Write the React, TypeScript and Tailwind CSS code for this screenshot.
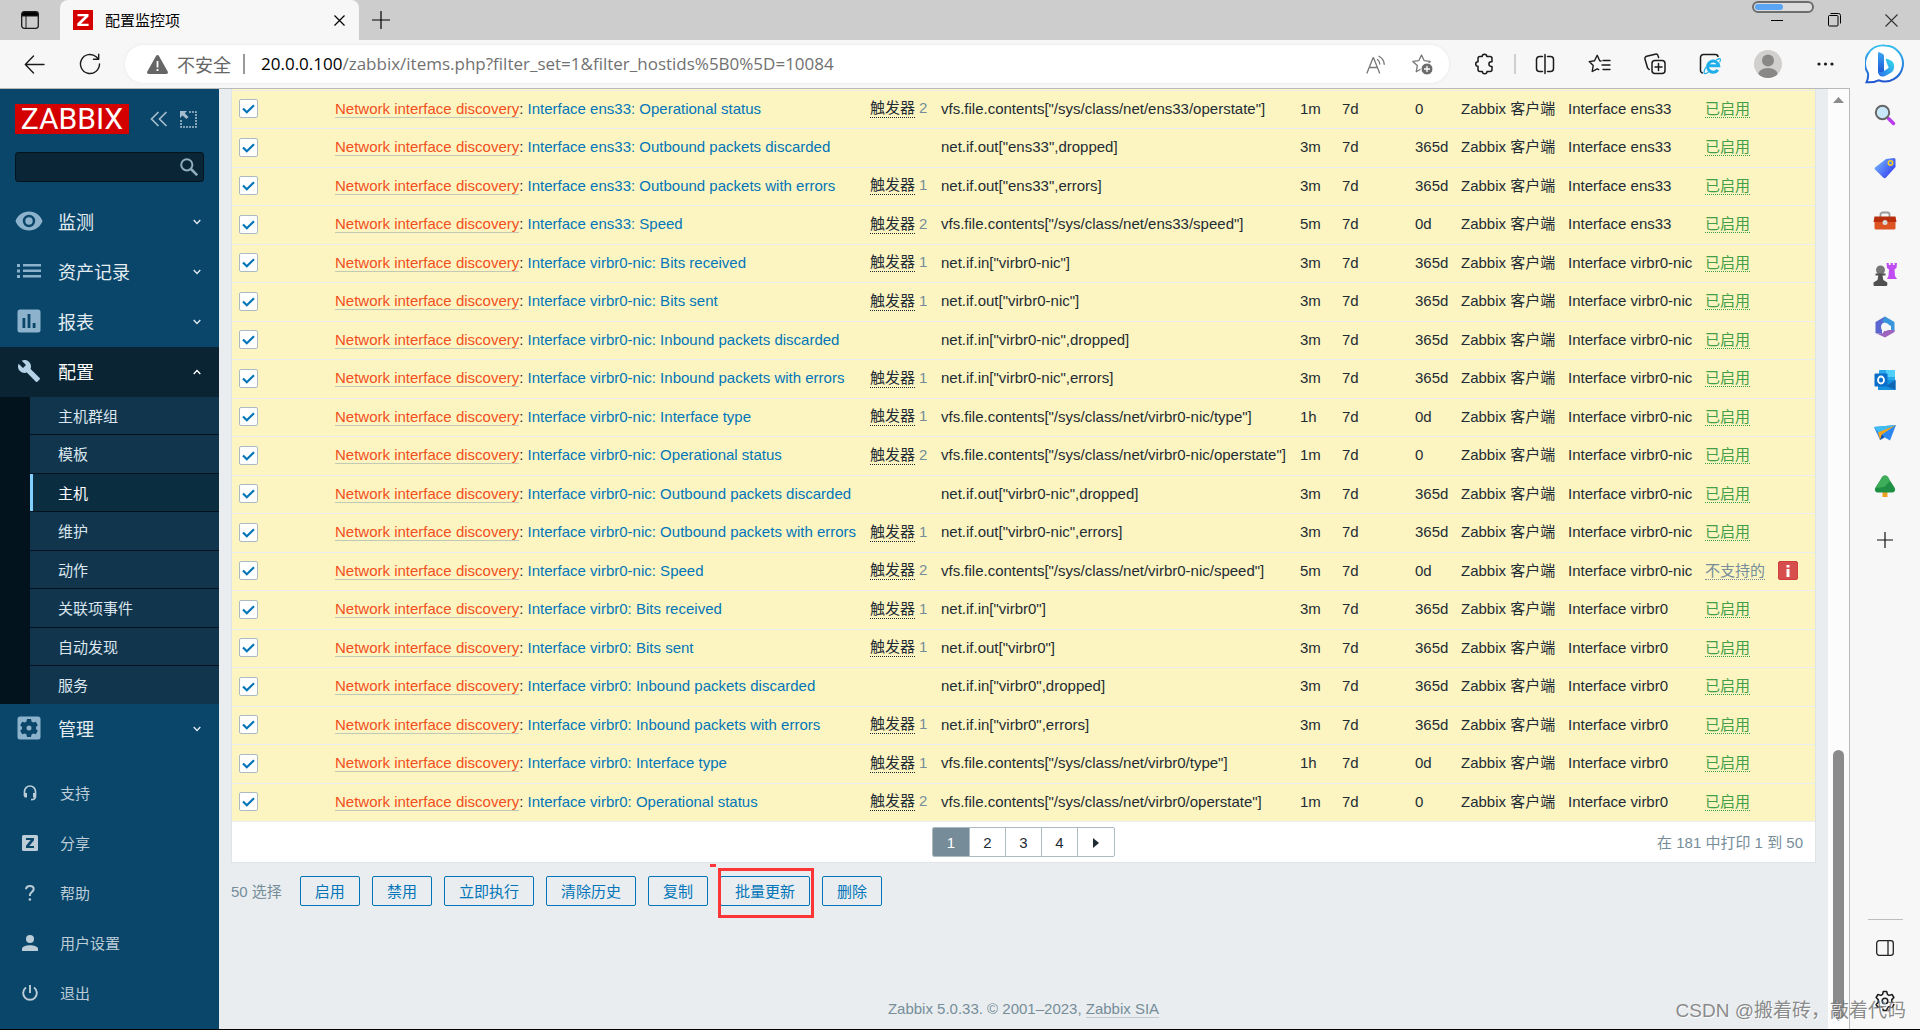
import type { ReactNode } from "react";

type Item = {
  name: string;
  triggers: number;
  itemKey: string;
  interval: string;
  trends: string;
  iface: string;
  unsupported?: boolean;
};

const row = (
  iface: string,
  name: string,
  triggers: number,
  itemKey: string,
  interval: string,
  trends: string,
  unsupported = false,
): Item => ({ iface, name, triggers, itemKey, interval, trends, unsupported });

const items: Item[] = [
  row("ens33", "Operational status", 2, 'vfs.file.contents["/sys/class/net/ens33/operstate"]', "1m", "0"),
  row("ens33", "Outbound packets discarded", 0, 'net.if.out["ens33",dropped]', "3m", "365d"),
  row("ens33", "Outbound packets with errors", 1, 'net.if.out["ens33",errors]', "3m", "365d"),
  row("ens33", "Speed", 2, 'vfs.file.contents["/sys/class/net/ens33/speed"]', "5m", "0d"),
  row("virbr0-nic", "Bits received", 1, 'net.if.in["virbr0-nic"]', "3m", "365d"),
  row("virbr0-nic", "Bits sent", 1, 'net.if.out["virbr0-nic"]', "3m", "365d"),
  row("virbr0-nic", "Inbound packets discarded", 0, 'net.if.in["virbr0-nic",dropped]', "3m", "365d"),
  row("virbr0-nic", "Inbound packets with errors", 1, 'net.if.in["virbr0-nic",errors]', "3m", "365d"),
  row("virbr0-nic", "Interface type", 1, 'vfs.file.contents["/sys/class/net/virbr0-nic/type"]', "1h", "0d"),
  row("virbr0-nic", "Operational status", 2, 'vfs.file.contents["/sys/class/net/virbr0-nic/operstate"]', "1m", "0"),
  row("virbr0-nic", "Outbound packets discarded", 0, 'net.if.out["virbr0-nic",dropped]', "3m", "365d"),
  row("virbr0-nic", "Outbound packets with errors", 1, 'net.if.out["virbr0-nic",errors]', "3m", "365d"),
  row("virbr0-nic", "Speed", 2, 'vfs.file.contents["/sys/class/net/virbr0-nic/speed"]', "5m", "0d", true),
  row("virbr0", "Bits received", 1, 'net.if.in["virbr0"]', "3m", "365d"),
  row("virbr0", "Bits sent", 1, 'net.if.out["virbr0"]', "3m", "365d"),
  row("virbr0", "Inbound packets discarded", 0, 'net.if.in["virbr0",dropped]', "3m", "365d"),
  row("virbr0", "Inbound packets with errors", 1, 'net.if.in["virbr0",errors]', "3m", "365d"),
  row("virbr0", "Interface type", 1, 'vfs.file.contents["/sys/class/net/virbr0/type"]', "1h", "0d"),
  row("virbr0", "Operational status", 2, 'vfs.file.contents["/sys/class/net/virbr0/operstate"]', "1m", "0"),
];

/* ---------- browser chrome ---------- */

function Line({ size = 24, w = 1, children }: { size?: number; w?: number; children: ReactNode }) {
  return (
    <svg width={size} height={size} viewBox="0 0 24 24" fill="none" stroke="currentColor" strokeWidth={w} strokeLinecap="round" strokeLinejoin="round" aria-hidden="true">
      {children}
    </svg>
  );
}

function TabStrip() {
  return (
    <div className="flex h-10 items-stretch bg-[#cdcdcd]">
      <button aria-label="标签页操作" className="flex w-[60px] items-center justify-center">
        <svg width="18" height="18" viewBox="0 0 18 18" fill="none" stroke="#1b1b1b" aria-hidden="true">
          <rect x="0.7" y="0.7" width="16.6" height="16.6" rx="2.5" strokeWidth="1.3" />
          <path d="M1 3a2 2 0 0 1 2-2h12a2 2 0 0 1 2 2v2H1z" fill="#000" />
          <path d="M5 5v12" />
        </svg>
      </button>
      <div className="flex w-[299px] items-center rounded-t-lg bg-[#f7f7f7] pl-[13px] pr-2">
        <svg width="20" height="20" viewBox="0 0 20 20" aria-hidden="true">
          <rect width="20" height="20" fill="#d40000" />
          <path d="M4.500 4h11v2.400L8 13.700h7.600V16H4.300v-2.400L11.800 6.300H4.500z" fill="#fff" />
        </svg>
        <span className="ml-3 flex-1 text-[15px] text-black">配置监控项</span>
        <button aria-label="关闭标签页" className="flex h-6 w-6 items-center justify-center text-black">
          <svg width="11" height="11" viewBox="0 0 11 11" stroke="currentColor" strokeWidth="1.2" aria-hidden="true">
            <path d="M0.500 0.500l10 10M10.500 0.500l-10 10" />
          </svg>
        </button>
      </div>
      <button aria-label="新建标签页" className="ml-3 flex w-5 items-center justify-center text-black">
        <svg width="18" height="18" viewBox="0 0 18 18" stroke="currentColor" strokeWidth="1.2" aria-hidden="true">
          <path d="M9 0v18M0 9h18" />
        </svg>
      </button>
      <div className="relative ml-auto flex items-center">
        <div className="absolute left-1 top-px h-3 w-[62px] rounded-full border-2 border-[#6d6d6d] bg-[#dcdcdc] p-px">
          <div className="h-1.5 w-7 rounded-full bg-[#5aa5f5]" />
        </div>
        <button aria-label="最小化" className="flex h-10 w-[58px] items-center justify-center">
          <span className="h-px w-3 bg-black" />
        </button>
        <button aria-label="还原" className="flex h-10 w-[56px] items-center justify-center">
          <svg width="13" height="14" viewBox="0 0 13 14" fill="none" stroke="#000" strokeWidth="1" aria-hidden="true">
            <rect x="0.500" y="2.500" width="9.500" height="10.500" rx="1" />
            <path d="M2.500 0.500h8a2 2 0 0 1 2 2v8" />
          </svg>
        </button>
        <button aria-label="关闭" className="flex h-10 w-[58px] items-center justify-center">
          <svg width="13" height="13" viewBox="0 0 13 13" stroke="#333" strokeWidth="1.1" aria-hidden="true">
            <path d="M0.500 0.500l12 12M12.500 0.500l-12 12" />
          </svg>
        </button>
      </div>
    </div>
  );
}

const starPath = "M10.500 2l2.600 5.600 6.100.8-4.500 4.200 1.100 6.200-5.300-3-5.300 3 1.100-6.200L1.800 8.400l6.100-.8z";

function Toolbar() {
  return (
    <div className="flex h-12 items-center bg-[#f7f7f7] text-[#1b1b1b]">
      <button aria-label="后退" className="ml-6 flex w-[21px] justify-center">
        <svg width="21" height="19" viewBox="0 0 21 19" fill="none" stroke="currentColor" strokeWidth="1.400" strokeLinecap="round" strokeLinejoin="round" aria-hidden="true">
          <path d="M20 9.500H1.500M9.500 1L1.300 9.500 9.500 18" />
        </svg>
      </button>
      <button aria-label="刷新" className="ml-[34px] flex w-[22px] justify-center">
        <svg width="22" height="22" viewBox="0 0 22 22" fill="none" stroke="currentColor" strokeWidth="1.400" strokeLinecap="round" strokeLinejoin="round" aria-hidden="true">
          <path d="M20.500 11a9.500 9.500 0 1 1-3.300-7.200L19.500 6M19.700 1.200V6.200H14.500" />
        </svg>
      </button>
      <div className="ml-6 flex h-[38px] flex-1 items-center rounded-full bg-white pl-[22px] pr-4 shadow-[0_0_4px_rgba(0,0,0,0.06)]">
        <svg width="21" height="19" viewBox="0 0 21 19" aria-hidden="true">
          <path d="M9 .9a1.700 1.700 0 0 1 3 0l8.700 15.700A1.600 1.600 0 0 1 19.300 19H1.700a1.600 1.600 0 0 1-1.400-2.400z" fill="#666" />
          <path d="M9.600 6h1.800v6.500H9.600zM9.600 14h1.800v2H9.600z" fill="#fff" />
        </svg>
        <span className="ml-[9px] text-[18px] leading-6 text-[#666]">不安全</span>
        <span className="ml-3 h-5 w-0.5 bg-[#999]" />
        <a href="#items" className="ml-4 font-['Open_Sans','Noto_Sans_CJK_SC',sans-serif] text-[17px] leading-6 text-[#717171]">
          <span className="text-black">20.0.0.100</span>/zabbix/items.php?filter_set=1&amp;filter_hostids%5B0%5D=10084
        </a>
        <span className="flex-1" />
        <button aria-label="大声朗读" className="mr-[25px] text-[#777]">
          <svg width="20" height="19" viewBox="0 0 20 19" fill="none" stroke="currentColor" strokeWidth="1.300" strokeLinecap="round" aria-hidden="true">
            <path d="M1 18L7 3h.6l6 15M3.300 12.500h8M11.500 4.500c1.500 1.200 2.300 2.800 2.300 4.500M13 1.300c3.200 1.800 5 4.600 5.200 8" />
          </svg>
        </button>
        <button aria-label="收藏此页" className="text-[#777]">
          <svg width="22" height="22" viewBox="0 0 22 22" fill="none" stroke="currentColor" strokeWidth="1.300" strokeLinejoin="round" aria-hidden="true">
            <path d={starPath} />
            <circle cx="16" cy="16" r="6" fill="#6d6d6d" stroke="#fff" strokeWidth="1" />
            <path d="M16 13v6M13 16h6" stroke="#fff" strokeWidth="1.300" />
          </svg>
        </button>
      </div>
      <div className="flex items-center">
        <button aria-label="扩展" className="ml-[23px] flex w-6 justify-center">
          <Line size={24} w={1.5}>
            <path d="M8 4.500h2.200a2.300 2.300 0 0 1 4.600 0H18a2 2 0 0 1 2 2v3.300h-.8a2.300 2.300 0 0 0 0 4.600h.8v3.100a2 2 0 0 1-2 2h-3a2.300 2.300 0 0 1-4.600 0H8a2 2 0 0 1-2-2v-3.200a2.300 2.300 0 0 1 0-4.600V6.500a2 2 0 0 1 2-2z" />
          </Line>
        </button>
        <span className="ml-[18px] h-5 w-0.5 bg-[#cfcfcf]" />
        <button aria-label="分屏" className="ml-[17px] flex w-6 justify-center">
          <Line size={24} w={1.5}>
            <path d="M9.500 4.500H6.500a3 3 0 0 0-3 3v9a3 3 0 0 0 3 3h3M14.500 4.500h3a3 3 0 0 1 3 3v9a3 3 0 0 1-3 3h-3M12 2.500v19" />
          </Line>
        </button>
        <button aria-label="收藏夹" className="ml-[31px] flex w-6 justify-center">
          <Line size={24} w={1.4}>
            <path d="M13 9l-1.300-.3L9.200 3.300 6.500 8.700l-5.300.9 4 4-1 5.900 5-2.700 1.500.8M15 8.500h7M14 13h8M15 17.500h7" />
          </Line>
        </button>
        <button aria-label="集锦" className="ml-[31px] flex w-6 justify-center">
          <Line size={24} w={1.5}>
            <rect x="9" y="8.500" width="13" height="13" rx="3" />
            <path d="M15.500 11.500v7M12 15h7M6.200 17.500L4.600 16 2 7.300a2.400 2.400 0 0 1 1.700-3l8.500-2.100a2.400 2.400 0 0 1 2.900 1.700l.5 1.600" />
          </Line>
        </button>
        <button aria-label="Internet Explorer 模式" className="ml-[31px] flex w-6 justify-center">
          <svg width="24" height="24" viewBox="0 0 24 24" fill="none" aria-hidden="true">
            <path d="M5 21a2.500 2.500 0 0 1-2.500-2.500v-13A3 3 0 0 1 5.500 2.500h12A2.500 2.500 0 0 1 20 5" stroke="#1b1b1b" strokeWidth="1.500" />
            <path d="M19.800 17.800a5.600 5.600 0 1 1 .9-4H9.800" stroke="#1eaee9" strokeWidth="3" />
            <path d="M18 8.300c2-1.600 3.800-2 4.300-1.200.4.700 0 2-.7 3.200M8.500 14.500c-2.400 3.300-3 6.300-2 7 .8.400 2.300-.2 4-1.500" stroke="#1eaee9" strokeWidth="1.200" />
          </svg>
        </button>
        <button aria-label="个人资料" className="ml-8 flex w-7 justify-center">
          <svg width="28" height="28" viewBox="0 0 28 28" aria-hidden="true">
            <clipPath id="avatar">
              <circle cx="14" cy="14" r="14" />
            </clipPath>
            <g clipPath="url(#avatar)">
              <rect width="28" height="28" fill="#d2d0ce" />
              <circle cx="14" cy="10.500" r="6" fill="#8a8886" />
              <ellipse cx="14" cy="25" rx="10" ry="7" fill="#8a8886" />
            </g>
          </svg>
        </button>
        <button aria-label="设置及其他" className="ml-[31px] flex w-6 justify-center">
          <svg width="17" height="4" viewBox="0 0 17 4" fill="currentColor" aria-hidden="true">
            <circle cx="2" cy="2" r="1.600" />
            <circle cx="8.500" cy="2" r="1.600" />
            <circle cx="15" cy="2" r="1.600" />
          </svg>
        </button>
        <button aria-label="Bing" className="ml-[28px] mr-4 flex w-[39px] justify-center">
          <svg width="39" height="40" viewBox="0 0 39 40" fill="none" aria-hidden="true">
            <defs>
              <linearGradient id="bingRing" x1="0" y1="0" x2="0" y2="1">
                <stop offset="0" stopColor="#35bff0" />
                <stop offset="1" stopColor="#2157cf" />
              </linearGradient>
              <linearGradient id="bingStem" x1="0" y1="0" x2="0" y2="1">
                <stop offset="0" stopColor="#3aa6f5" />
                <stop offset="1" stopColor="#1b4fd0" />
              </linearGradient>
              <linearGradient id="bingSwoosh" x1="1" y1="0" x2="0" y2="1">
                <stop offset="0" stopColor="#35e0ea" />
                <stop offset="1" stopColor="#2a6cec" />
              </linearGradient>
            </defs>
            <path d="M20 1.500a18 18 0 1 1-6.500 34.800C9.500 38.300 5 38.500 1.500 38.300c1.500-3.300 2.200-5.300 1.400-9.300A18 18 0 0 1 20 1.500z" fill="#fff" stroke="url(#bingRing)" strokeWidth="2" />
            <path d="M13 9.200q0-1.400 1.300-.9l3.200 1.400q1.500.6 1.500 2.300v15.500L16 31q-3-.5-3-4z" fill="url(#bingStem)" />
            <path d="M20.800 15.800q-.3-1.500 1.200-1l3.500 1.400q3.700 1.800 3.700 6.300t-4 6.800L20 32q-3.500 1.500-5.700-.8Q13 29.500 13 27q2.200 2 5 .4l4.500-2.700q2.200-1.400.4-2.700z" fill="url(#bingSwoosh)" />
          </svg>
        </button>
      </div>
    </div>
  );
}

/* ---------- edge side rail ---------- */

function Rail() {
  const cls = "flex h-6 w-6 items-center justify-center";
  return (
    <div className="flex w-[70px] shrink-0 flex-col items-center bg-[#f7f7f7] pt-[15px]">
      <div className="flex flex-col items-center gap-[29px]">
        <button aria-label="搜索" className={cls}>
          <svg width="22" height="22" viewBox="0 0 22 22" fill="none" aria-hidden="true">
            <path d="M14.500 14.500l5 5" stroke="#b83df0" strokeWidth="3.500" strokeLinecap="round" />
            <circle cx="8.500" cy="8.500" r="6.700" fill="#c7e8f8" stroke="#666" strokeWidth="2" />
          </svg>
        </button>
        <button aria-label="购物" className={cls}>
          <svg width="22" height="22" viewBox="0 0 22 22" aria-hidden="true">
            <defs>
              <linearGradient id="tag" x1="0" y1="0.300" x2="1" y2="1">
                <stop offset="0" stopColor="#6fb0fb" />
                <stop offset="1" stopColor="#2d2bf0" />
              </linearGradient>
            </defs>
            <path d="M12 2l8-1a1.500 1.500 0 0 1 1.500 1.500L21.500 10 12 20.500a2 2 0 0 1-2.800 0L1 12.500a1.500 1.500 0 0 1 0-2z" fill="url(#tag)" />
            <circle cx="16.500" cy="6" r="2.200" fill="#4d7ef5" stroke="#f8cf22" strokeWidth="1.500" />
          </svg>
        </button>
        <button aria-label="工具" className={cls}>
          <svg width="24" height="20" viewBox="0 0 24 20" aria-hidden="true">
            <path d="M7.500 6V3.500a2 2 0 0 1 2-2h5a2 2 0 0 1 2 2V6" fill="none" stroke="#999" strokeWidth="1.800" />
            <rect x="1.500" y="6" width="21" height="12.500" rx="1.500" fill="#dd5423" />
            <path d="M1.500 5.500h21l1 5.500H.5z" fill="#b92f0d" />
            <circle cx="12" cy="11.500" r="2.500" fill="#d9d9d9" />
          </svg>
        </button>
        <button aria-label="游戏" className={cls}>
          <svg width="24" height="24" viewBox="0 0 24 24" aria-hidden="true">
            <path d="M13.500 1h2.300v2h1.800V1h2.300v2h1.600V1H24l-.5 5-2 1.500.5 6.500 2 3h-10l1.500-3 .5-6.500-2-1.500z" fill="#bf4df2" />
            <circle cx="7.500" cy="8" r="4.500" fill="#777" />
            <path d="M2.500 11.500h10v2h-3l.8 4.500 4 2.500V23a1.500 1.500 0 0 1-1 1H1.500a1.500 1.500 0 0 1-1-1v-2.500l4-2.500.8-4.500h-2.800z" fill="#505050" />
          </svg>
        </button>
        <button aria-label="Microsoft 365" className={cls}>
          <svg width="22" height="22" viewBox="0 0 22 22" aria-hidden="true">
            <path d="M11 .5L1.500 6v11L8 18V8l6-4z" fill="#5b66cf" />
            <path d="M11 .5L20.500 6v9l-3.500 1V10L8 5z" fill="#3a96dc" />
            <path d="M1.500 17l9.500 4.500 9.500-5.500v-2L11 14l-3 4z" fill="#9c63bf" />
            <circle cx="11" cy="11" r="4" fill="#f7f7f7" />
          </svg>
        </button>
        <button aria-label="Outlook" className={cls}>
          <svg width="22" height="22" viewBox="0 0 22 22" aria-hidden="true">
            <rect x="5" y="1" width="16" height="12" rx="1" fill="#28a8ea" />
            <path d="M12 1h9v7h-9z" fill="#50d0f8" />
            <path d="M4 11h17.500v10H4z" fill="#1490df" />
            <path d="M21.500 11L12 17l9.500 4z" fill="#1066b5" />
            <rect x="0.500" y="4.500" width="13" height="13" rx="1" fill="#0a6fca" />
            <ellipse cx="7" cy="11" rx="3" ry="3.500" fill="none" stroke="#fff" strokeWidth="1.800" />
          </svg>
        </button>
        <button aria-label="投递" className={cls}>
          <svg width="22" height="18" viewBox="0 0 22 18" aria-hidden="true">
            <path d="M0 3L22 1 16 16.500l-5-3-5 2.500z" fill="#2d87f0" />
            <path d="M0 3L22 1 4.500 8.500z" fill="#3fbdf2" />
            <path d="M22 1L4 8.500l2 7.500 2-5.500z" fill="#f2a51f" />
            <path d="M8 10.500L6 16l4-3z" fill="#174a9b" />
          </svg>
        </button>
        <button aria-label="种树" className={cls}>
          <svg width="22" height="23" viewBox="0 0 22 23" aria-hidden="true">
            <rect x="8.500" y="16" width="5" height="6" fill="#f0a020" />
            <path d="M11 .5c2 0 3 1.500 4 3.500l5.500 8.500c1.500 3 0 5-3 5h-13c-3 0-4.500-2-3-5L7 4C8 2 9 .5 11 .5z" fill="#1e8f43" />
            <path d="M11 .5c2 0 3 1.500 4 3.500l1 2-6 6-8 1L7 4C8 2 9 .5 11 .5z" fill="#3fae5a" />
          </svg>
        </button>
      </div>
      <button aria-label="自定义" className="mt-[30px] flex h-6 w-6 items-center justify-center">
        <svg width="16" height="16" viewBox="0 0 16 16" stroke="#111" strokeWidth="1.200" aria-hidden="true">
          <path d="M8 0v16M0 8h16" />
        </svg>
      </button>
      <div className="mt-auto h-px w-[35px] bg-[#bdbdbd]" />
      <button aria-label="隐藏边栏" className="mt-5 text-[#222]">
        <svg width="18" height="16" viewBox="0 0 18 16" fill="none" stroke="currentColor" strokeWidth="1.300" aria-hidden="true">
          <rect x="0.700" y="0.700" width="16.600" height="14.600" rx="2.500" />
          <path d="M12 1v14" />
        </svg>
      </button>
      <button aria-label="设置" className="mb-4 mt-[33px] text-[#1b1b1b]">
        <Line size={24} w={1.5}>
          <circle cx="12" cy="12" r="2.800" />
          <path d="M10.300 2.500h3.400l.7 2.900 1.700 1 2.900-.9 1.900 3-2.100 2.100v2.800l2.100 2.100-1.900 3-2.900-.9-1.700 1-.7 2.900h-3.400l-.7-2.900-1.700-1-2.900.9-1.900-3 2.100-2.100v-2.800L3.100 8.500l1.900-3 2.900.9 1.700-1z" />
        </Line>
      </button>
    </div>
  );
}

/* ---------- zabbix sidebar ---------- */

const menuIcons = {
  eye: (
    <svg width="28" height="20" viewBox="0 0 28 20" aria-hidden="true">
      <path fillRule="evenodd" d="M14 .5C7.500.500 2.500 4.500.5 10c2 5.500 7 9.500 13.500 9.500S25.500 15.500 27.500 10C25.500 4.500 20.500.500 14 .500zm0 15.700A6.200 6.200 0 1 1 14 3.800a6.200 6.200 0 0 1 0 12.400zM14 6.300a3.700 3.700 0 1 0 0 7.400 3.700 3.700 0 0 0 0-7.400z" fill="currentColor" />
    </svg>
  ),
  list: (
    <svg width="24" height="14" viewBox="0 0 24 14" fill="currentColor" aria-hidden="true">
      <path d="M0 0h3v3H0zM0 5.500h3v3H0zM0 11h3v3H0zM6 0h18v2.500H6zM6 5.500h18V8H6zM6 11h18v2.500H6z" />
    </svg>
  ),
  chart: (
    <svg width="24" height="24" viewBox="0 0 24 24" aria-hidden="true">
      <rect x="0.500" y="0.500" width="23" height="23" rx="2.500" fill="currentColor" />
      <path d="M5.500 9h2.800v10H5.500zM10.600 5h2.800v14h-2.800zM15.700 14h2.800v5h-2.800z" fill="#0a466a" />
    </svg>
  ),
  wrench: (
    <svg width="24" height="24" viewBox="0 0 24 24" aria-hidden="true">
      <path d="M22.700 19l-9.100-9.100c.9-2.300.4-5-1.500-6.900-2-2-5-2.400-7.400-1.300L9 6 6 9 1.600 4.700C.4 7.100.900 10.100 2.900 12.100c1.900 1.900 4.600 2.400 6.900 1.500l9.100 9.100c.4.400 1 .4 1.400 0l2.300-2.300c.5-.4.500-1.100.1-1.400z" fill="currentColor" />
    </svg>
  ),
  gear: (
    <svg width="24" height="24" viewBox="0 0 24 24" aria-hidden="true">
      <rect x="0.500" y="0.500" width="23" height="23" rx="2.500" fill="currentColor" />
      <path fillRule="evenodd" d="M10 3h4l.6 2.700 1.600.9 2.600-.8 2 3.400L19 11v2l1.800 1.800-2 3.400-2.600-.8-1.600.9L14 21h-4l-.6-2.700-1.600-.9-2.600.8-2-3.400L5 13v-2L3.200 9.200l2-3.400 2.600.8 1.600-.9zM12 9.500a2.500 2.500 0 1 0 0 5 2.500 2.500 0 0 0 0-5z" fill="#0a466a" />
    </svg>
  ),
};

function MenuItem({ icon, label, open = false }: { icon: ReactNode; label: string; open?: boolean }) {
  return (
    <a
      href="#menu"
      className={
        open
          ? "flex h-[50px] items-center bg-[#0a2434] text-white"
          : "flex h-[50px] items-center text-[#e4edf2]"
      }
    >
      <span className={open ? "flex w-[58px] justify-center pb-0.5 text-[#b6d2e6]" : "flex w-[58px] justify-center pb-0.5 text-[#8db2cc]"}>{icon}</span>
      <span className="flex-1 pb-0.5 text-[18px] leading-6">{label}</span>
      <svg width="8" height="6" viewBox="0 0 8 6" fill="none" stroke="currentColor" strokeWidth="1.300" className="mr-[18px]" aria-hidden="true">
        <path d={open ? "M0.700 5L4 1.500 7.300 5" : "M0.700 1L4 4.500 7.300 1"} />
      </svg>
    </a>
  );
}

const submenu = ["主机群组", "模板", "主机", "维护", "动作", "关联项事件", "自动发现", "服务"];

function Sidebar() {
  return (
    <nav className="flex w-[219px] shrink-0 flex-col bg-[#0a466a]">
      <div className="flex items-center pl-[15px] pt-[15px]">
        <a href="#home" className="flex h-[30px] w-[114px] items-center justify-center bg-[#d40000] font-[Roboto,sans-serif] text-[30px] leading-none text-white">
          ZABBIX
        </a>
        <button aria-label="折叠侧边栏" className="ml-[21px] text-[#a4bccb]">
          <svg width="18" height="16" viewBox="0 0 18 16" fill="none" stroke="currentColor" strokeWidth="1.700" aria-hidden="true">
            <path d="M8.500 1L1.500 8l7 7M16.500 1L9.500 8l7 7" />
          </svg>
        </button>
        <button aria-label="隐藏侧边栏" className="ml-3 text-[#a4bccb]">
          <svg width="17" height="17" viewBox="0 0 17 17" fill="none" stroke="currentColor" aria-hidden="true">
            <path d="M9 1h7v15H1V9" strokeWidth="1.600" strokeDasharray="2 1" />
            <path d="M0 0h7L4.800 2.200 8.500 6 6.500 8 2.500 4.500 0 7z" fill="currentColor" stroke="none" />
          </svg>
        </button>
      </div>
      <div className="relative mx-[15px] mb-[15px] mt-[18px]">
        <input aria-label="搜索" type="text" className="block h-[30px] w-full rounded-[3px] border border-[#03141f] bg-[#0a2636] px-2 text-[15px] text-white" />
        <svg width="18" height="18" viewBox="0 0 18 18" fill="none" stroke="#8fadbf" className="absolute right-1.5 top-1.5" aria-hidden="true">
          <circle cx="6.800" cy="6.800" r="5.600" strokeWidth="2" />
          <path d="M11 11l6.200 6.200" strokeWidth="2.600" />
        </svg>
      </div>
      <MenuItem icon={menuIcons.eye} label="监测" />
      <MenuItem icon={menuIcons.list} label="资产记录" />
      <MenuItem icon={menuIcons.chart} label="报表" />
      <MenuItem icon={menuIcons.wrench} label="配置" open />
      <ul className="bg-[#03131d] pl-[30px] text-[15px] leading-5">
        {submenu.map((label, i) => (
          <li
            key={label}
            className={
              i === submenu.length - 1
                ? "h-[38px]"
                : "border-b border-[#03131d] odd:h-[38px] even:h-[39px]"
            }
          >
            <a
              href="#sub"
              className={
                label === "主机"
                  ? "flex h-full items-center border-l-[3px] border-[#80cfff] bg-[#0b2d40] pl-[25px] text-white"
                  : "flex h-full items-center bg-[#11354d] pl-7 text-[#dbe6ee]"
              }
            >
              {label}
            </a>
          </li>
        ))}
      </ul>
      <MenuItem icon={menuIcons.gear} label="管理" />
      <ul className="mt-auto pb-[11px] text-[15px] text-[#bccdd8]">
        {footerLinks.map(([label, icon]) => (
          <li key={label}>
            <a href="#link" className="flex h-[50px] items-center">
              <span className="flex w-[60px] justify-center">{icon}</span>
              {label}
            </a>
          </li>
        ))}
      </ul>
    </nav>
  );
}

const footerLinks: [string, ReactNode][] = [
  [
    "支持",
    <svg width="14" height="16" viewBox="0 0 14 16" fill="none" stroke="currentColor" aria-hidden="true">
      <path d="M1.500 11V6.500a5.500 5.500 0 0 1 11 0V11c0 2.500-1.500 3.700-4.500 3.700" strokeWidth="1.700" />
      <path d="M1 8h3v4.500H2.500A1.500 1.500 0 0 1 1 11zM13 8h-3v4.500h1.500A1.500 1.500 0 0 0 13 11z" fill="currentColor" stroke="none" />
    </svg>,
  ],
  [
    "分享",
    <svg width="16" height="16" viewBox="0 0 16 16" aria-hidden="true">
      <rect width="16" height="16" rx="1.500" fill="currentColor" />
      <path d="M4 3h8v2.200L7.300 11H12v2H4v-2.200L8.700 5H4z" fill="#0a466a" />
    </svg>,
  ],
  [
    "帮助",
    <svg width="10" height="16" viewBox="0 0 10 16" fill="none" aria-hidden="true">
      <path d="M1 4.200C1 2.200 2.700 1 4.800 1s3.900 1.200 3.900 3.100c0 3-3.800 3-3.800 6.200v.7" stroke="currentColor" strokeWidth="2" />
      <circle cx="4.900" cy="14.500" r="1.300" fill="currentColor" />
    </svg>,
  ],
  [
    "用户设置",
    <svg width="16" height="16" viewBox="0 0 16 16" fill="currentColor" aria-hidden="true">
      <circle cx="8" cy="4" r="4" />
      <path d="M0 16v-2c0-2.500 4-3.700 8-3.700s8 1.200 8 3.700v2z" />
    </svg>,
  ],
  [
    "退出",
    <svg width="16" height="16" viewBox="0 0 16 16" fill="none" stroke="currentColor" strokeWidth="1.900" aria-hidden="true">
      <path d="M8 0v8M4 2.500a6.800 6.800 0 1 0 8 0" />
    </svg>,
  ],
];

/* ---------- items table ---------- */

function ItemRow({ item }: { item: Item }) {
  const full = `Interface ${item.iface}: ${item.name}`;
  return (
    <tr className="odd:h-[38px] even:h-[39px] *:whitespace-nowrap *:border-b *:border-[#ebeef0] *:pb-0.5">
      <td className="align-middle">
        <div className="relative ml-[7px] flex h-[19px] w-[19px]">
          <input type="checkbox" aria-label={full} defaultChecked className="peer h-[19px] w-[19px] appearance-none rounded-[2px] border border-[#acbbc2] bg-white" />
          <svg width="13" height="10" viewBox="0 0 13 10" fill="none" stroke="#0275b8" strokeWidth="2.200" className="pointer-events-none absolute left-[3px] top-[5px] hidden peer-checked:block" aria-hidden="true">
            <path d="M1 4.500l3.800 3.700L12 1.200" />
          </svg>
        </div>
      </td>
      <td>
        <a href="#discovery" className="border-b border-[#c3c9b4] text-[#f24f1d]">
          Network interface discovery
        </a>
        {": "}
        <a href="#item" className="text-[#0275b8]">
          {full}
        </a>
      </td>
      <td>
        {item.triggers > 0 && (
          <>
            <button className="border-b border-dotted border-[#1f2c33]">触发器</button>
            <span className="ml-1 text-[#768d99]">{item.triggers}</span>
          </>
        )}
      </td>
      <td>{item.itemKey}</td>
      <td>{item.interval}</td>
      <td>7d</td>
      <td>{item.trends}</td>
      <td>Zabbix 客户端</td>
      <td>Interface {item.iface}</td>
      <td>
        {item.unsupported ? (
          <a href="#status" className="border-b border-dotted border-[#768d99] text-[#768d99]">
            不支持的
          </a>
        ) : (
          <a href="#status" className="border-b border-dotted border-[#429e47] text-[#429e47]">
            已启用
          </a>
        )}
      </td>
      <td>
        {item.unsupported && (
          <button aria-label="错误信息" className="flex h-[19px] w-5 items-center justify-center rounded-[2px] border border-[#d23d3d] bg-[#d64e4e]">
            <svg width="4" height="12" viewBox="0 0 4 12" fill="#fff" aria-hidden="true">
              <path d="M0.500 0h3v2.500h-3zM0.500 4h3v8h-3z" />
            </svg>
          </button>
        )}
      </td>
    </tr>
  );
}

function ActionButton({ children }: { children: ReactNode }) {
  return <button className="h-[30px] rounded-[2px] border border-[#0275b8] px-3.5 pt-px text-[15px] leading-7 text-[#0275b8]">{children}</button>;
}

function Content() {
  return (
    <main className="flex min-w-0 flex-1 flex-col bg-[#e9edf0] px-3 font-['Liberation_Sans','Noto_Sans_CJK_SC',sans-serif] text-[15px] leading-[18px] text-[#1f2c33]">
      <div className="border-x border-b border-[#dfe4e7] bg-[#fcf5c2] pt-px">
        <table className="w-full table-fixed border-separate border-spacing-0 border-t border-[#ebeef0]">
          <colgroup>
            <col className="w-[103px]" />
            <col />
            <col className="w-[71px]" />
            <col className="w-[359px]" />
            <col className="w-[42px]" />
            <col className="w-[73px]" />
            <col className="w-[46px]" />
            <col className="w-[107px]" />
            <col className="w-[137px]" />
            <col className="w-[73px]" />
            <col className="w-[37px]" />
          </colgroup>
          <tbody>
            {items.map((item) => (
              <ItemRow key={item.itemKey} item={item} />
            ))}
          </tbody>
        </table>
        <div className="grid h-10 grid-cols-[1fr_auto_1fr] items-start bg-white pt-[5px]">
          <span />
          <div className="flex h-[30px] divide-x divide-[#acbbc2] overflow-hidden rounded-[2px] border border-[#acbbc2] *:pt-px">
            <button className="w-[37px] bg-[#768d99] text-white">1</button>
            <button className="w-[36px]">2</button>
            <button className="w-[36px]">3</button>
            <button className="w-[36px]">4</button>
            <button aria-label="下一页" className="flex w-[36px] items-center justify-center">
              <svg width="6" height="10" viewBox="0 0 6 10" fill="#1f2c33" aria-hidden="true">
                <path d="M0 0l6 5-6 5z" />
              </svg>
            </button>
          </div>
          <div className="self-start pr-3 pt-[7px] text-right text-[#768d99]">在 181 中打印 1 到 50</div>
        </div>
      </div>
      <div className="mt-[13px] flex items-center gap-3">
        <span className="mr-1.5 pt-px text-[#768d99]">50 选择</span>
        <ActionButton>启用</ActionButton>
        <ActionButton>禁用</ActionButton>
        <ActionButton>立即执行</ActionButton>
        <ActionButton>清除历史</ActionButton>
        <ActionButton>复制</ActionButton>
        <div className="relative flex">
          <ActionButton>批量更新</ActionButton>
          <div className="pointer-events-none absolute -bottom-3 -left-0.5 -right-1 -top-2 border-[3px] border-[#fc3636]" />
          <div className="pointer-events-none absolute -left-2.5 -top-3 h-[3px] w-1.5 bg-[#fc3636]" />
        </div>
        <ActionButton>删除</ActionButton>
      </div>
      <footer className="mt-auto pb-[11px] pt-6 text-center text-[#768d99]">
        Zabbix 5.0.33. © 2001–2023,{" "}
        <a href="#sia" className="border-b border-[#c3cbd0]">
          Zabbix SIA
        </a>
      </footer>
    </main>
  );
}

function ScrollBar() {
  return (
    <div className="flex w-[21px] shrink-0 flex-col items-center bg-[#fcfcfc] py-2" aria-hidden="true">
      <svg width="11" height="6" viewBox="0 0 11 6" fill="#8b8b8b">
        <path d="M5.500 0L11 6H0z" />
      </svg>
      <div className="mt-auto h-[265px] w-[11px] rounded-t-full bg-[#8b8b8b]" />
      <svg width="11" height="6" viewBox="0 0 11 6" fill="#8b8b8b">
        <path d="M0 0h11L5.500 6z" />
      </svg>
    </div>
  );
}

export default function App() {
  return (
    <div className="relative flex min-h-screen flex-col overflow-hidden border-b border-black bg-[#f7f7f7] font-['Noto_Sans_CJK_SC',sans-serif]">
      <TabStrip />
      <Toolbar />
      <div className="flex flex-1">
        <div className="flex min-w-0 flex-1 border-r border-t border-[#b9b9b9]">
          <Sidebar />
          <Content />
          <ScrollBar />
        </div>
        <Rail />
      </div>
      <div className="pointer-events-none absolute bottom-1 right-3.5 font-['Liberation_Sans','Noto_Sans_CJK_SC',sans-serif] text-[19px] leading-7 text-[#6e6e6e]/80 [text-shadow:1px_1px_0_rgba(255,255,255,0.8)]">
        CSDN @搬着砖，敲着代码
      </div>
    </div>
  );
}
